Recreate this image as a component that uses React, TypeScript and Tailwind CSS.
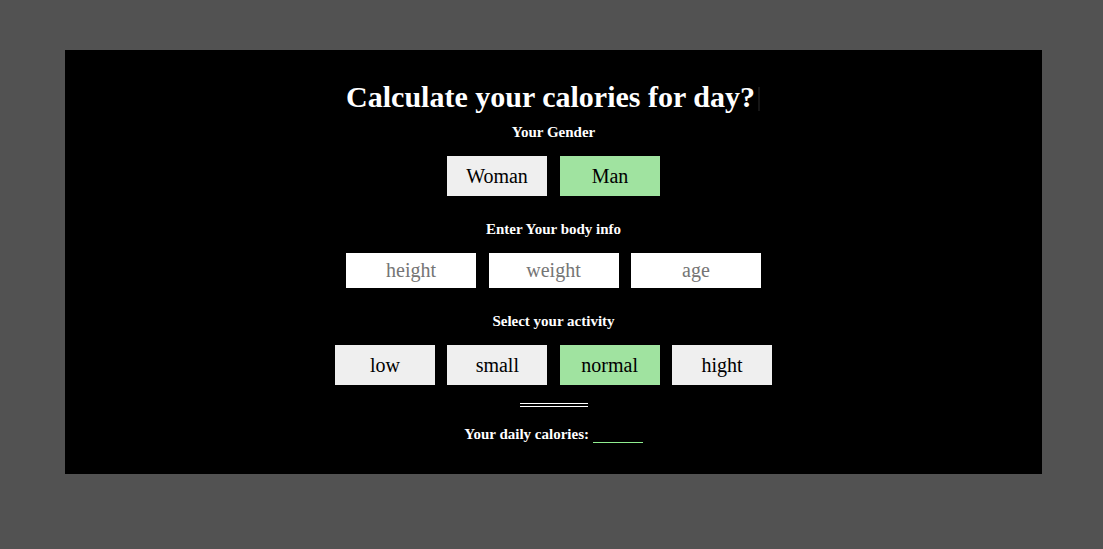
import { useState } from "react";

const serif = { fontFamily: '"Liberation Serif", "Times New Roman", serif' };

function App() {
  const [gender, setGender] = useState("man");
  const [activity, setActivity] = useState("normal");

  const genders = [
    { id: "woman", label: "Woman" },
    { id: "man", label: "Man" },
  ];
  const activities = ["low", "small", "normal", "hight"];

  return (
    <div className="min-h-screen bg-[#525252] pt-[50px] pb-[75px]" style={serif}>
      <div className="ml-[65px] w-[977px] h-[424px] bg-black flex flex-col items-center pt-[29px] text-white">
        <h1 className="text-[30px] leading-[36px] font-bold">
          Calculate your calories for day?
          <span className="inline-block w-[2px] h-[24px] ml-[3px] mr-[1px] align-[-4px] bg-[#151515]" />
        </h1>

        {/* Gender */}
        <p className="mt-[9px] text-[15px] leading-[17px] font-bold">Your Gender</p>
        <div className="mt-[15px] flex gap-[13px]">
          {genders.map((g) => (
            <button
              key={g.id}
              onClick={() => setGender(g.id)}
              className={`w-[100px] h-[40px] text-[20px] text-black ${
                gender === g.id ? "bg-[#a0e3a0]" : "bg-[#efefef]"
              }`}
            >
              {g.label}
            </button>
          ))}
        </div>

        {/* Body info */}
        <p className="mt-[25px] text-[15px] leading-[17px] font-bold">Enter Your body info</p>
        <div className="mt-[15px] flex gap-[12.5px]">
          <input
            placeholder="height"
            className="w-[130px] h-[35px] bg-white text-black text-center text-[20px] placeholder:text-[#757575] outline-none"
          />
          <input
            placeholder="weight"
            className="w-[130px] h-[35px] bg-white text-black text-center text-[20px] placeholder:text-[#757575] outline-none"
          />
          <input
            placeholder="age"
            className="w-[130px] h-[35px] bg-white text-black text-center text-[20px] placeholder:text-[#757575] outline-none"
          />
        </div>

        {/* Activity */}
        <p className="mt-[25px] text-[15px] leading-[17px] font-bold">Select your activity</p>
        <div className="mt-[15px] flex gap-[12.4px]">
          {activities.map((a) => (
            <button
              key={a}
              onClick={() => setActivity(a)}
              className={`w-[100px] h-[40px] text-[20px] text-black ${
                activity === a ? "bg-[#a0e3a0]" : "bg-[#efefef]"
              }`}
            >
              {a}
            </button>
          ))}
        </div>

        <div className="mt-[18px] w-[68px] h-[4px] border-y border-white" />

        <p className="mt-[19px] text-[15px] leading-[17px] font-bold">
          Your daily calories:{" "}
          <span className="inline-block w-[50px] h-[17px] border-b border-[#90ee90] align-top" />
        </p>
      </div>
    </div>
  );
}

export default App;
